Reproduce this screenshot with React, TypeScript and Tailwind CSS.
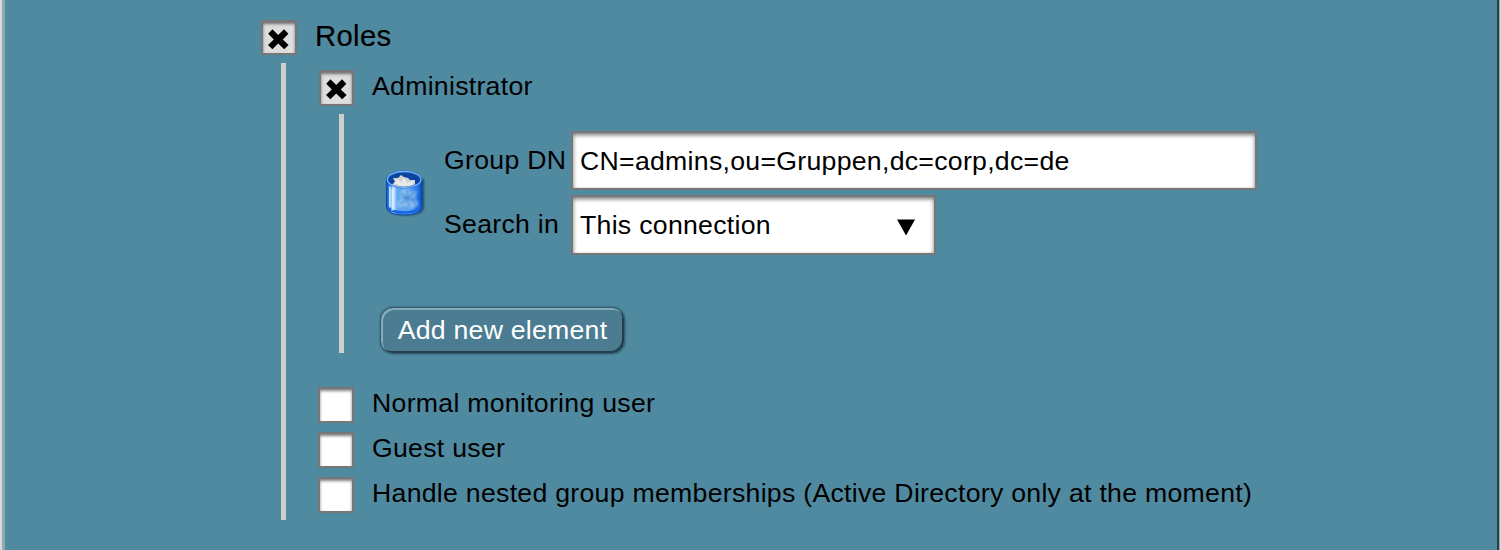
import type { ReactNode } from "react";

function CheckBox({ checked, className }: { checked?: boolean; className: string }) {
  return (
    <span
      role="checkbox"
      aria-checked={!!checked}
      className={`block shrink-0 border-2 border-[#77777a] shadow-[inset_0_2px_3px_rgba(0,0,0,0.5)] ${checked ? "bg-[#dedede]" : "bg-white"} ${className}`}
    >
      {checked && (
        <svg viewBox="0 0 32 32" className="h-8 w-8" fill="#000">
          <path d="M9.4 7.3 L15.2 13.1 L21 7.3 L25.4 11.7 L19.8 17.4 L25.6 23.1 L21.2 27.3 L15.2 21.5 L9.4 27.3 L5 23.1 L10.8 17.4 L5.2 11.7 Z" />
        </svg>
      )}
    </span>
  );
}

function Label({ children, className = "" }: { children: ReactNode; className?: string }) {
  return (
    <span className={`block whitespace-nowrap text-[26.67px] leading-[30px] tracking-[0.28px] ${className}`}>
      {children}
    </span>
  );
}

function TrashIcon() {
  return (
    <svg viewBox="0 0 40 48" className="h-12 w-10">
      <defs>
        <linearGradient id="body" x1="0" x2="1">
          <stop offset="0" stopColor="#1256c4" />
          <stop offset=".12" stopColor="#3f8eee" />
          <stop offset=".2" stopColor="#cfe9ff" />
          <stop offset=".3" stopColor="#5ba6f3" />
          <stop offset=".65" stopColor="#5aa3ec" />
          <stop offset=".88" stopColor="#2476e8" />
          <stop offset="1" stopColor="#0847b5" />
        </linearGradient>
        <filter id="soft"><feGaussianBlur stdDeviation=".8" /></filter>
      </defs>
      <path d="M2.5 10 V38 Q3 46 21 46.5 Q39 46 38.8 38 V10 Z" fill="#12333f" opacity=".75" filter="url(#soft)" />
      <path d="M1.5 10 V38 Q2 45.5 19.2 46 Q36.5 45.5 37 38 V10 Z" fill="url(#body)" stroke="#0749b5" strokeWidth="1" />
      <path d="M3 37 Q5 43.5 19.2 43.5 Q34 43 35.5 37" fill="none" stroke="#1765df" strokeWidth="2.6" />
      <ellipse cx="19.2" cy="10.5" rx="18" ry="9" fill="#0a4eba" />
      <ellipse cx="19.2" cy="10.5" rx="16.8" ry="8" fill="#0b439f" stroke="#6fb2ff" strokeWidth="1.4" />
      <path d="M7 15.5 L10 13 L8 9 L13 9 L16 6 L19 8 L23 9 L25 11 L30 11 L30 15.5 Q19 20 7 15.5 Z" fill="#cfd3d6" />
      <path d="M12 10 L16 13 L19 9 L22 14 L29 12 L27 16 L16 17 L9 14 Z" fill="#f5f2ed" opacity=".75" />
      <path d="M15 23 L20 19 L25 23 L32 22 L30 29 L34 35 L27 40 L20 37 L14 39 L11 34 L16 29 Z" fill="#a9d1f5" opacity=".6" filter="url(#soft)" />
      <path d="M16 24 L23 29 L30 23 M22 21 L24 38 M15 35 L24 29 L32 35 M17 29 L31 30" fill="none" stroke="#3d7dca" strokeWidth="1.4" opacity=".85" filter="url(#soft)" />
      <path d="M7 20 L8 20 L8.2 41 L7 41 Z M4.5 18 L5.2 18 L5.2 38 L4.5 38 Z" fill="#fff" stroke="#e4f5ff" strokeWidth="1.2" opacity=".8" />
    </svg>
  );
}

function OptionRow({ children }: { children: ReactNode }) {
  return (
    <div className="flex h-[45px] items-start">
      <CheckBox className="h-9 w-9" />
      <Label className="ml-[18px] pt-px">{children}</Label>
    </div>
  );
}

const field =
  "flex items-center whitespace-nowrap border-2 border-[#77777a] bg-white shadow-[inset_0_2px_4px_rgba(0,0,0,0.55)] text-[26.67px] tracking-[0.28px]";

export default function App() {
  return (
    <main className="flex h-[550px] w-[1501px] overflow-hidden bg-[#508aa0] font-['Liberation_Sans',sans-serif] text-black">
      <div className="w-[2px] bg-[#d9d9d9]" />
      <div className="w-px bg-[#a3a3a3]" />
      <div className="w-[2px] bg-[#84adbc]" />
      <div className="min-w-0 flex-1 pl-[256px] pt-5">
        <div className="flex h-[43px]">
          <CheckBox checked className="h-[35px] w-9" />
          <span className="ml-[18px] text-[29.33px] leading-[32px] tracking-[0.3px] [-webkit-text-stroke:0.2px_black]">Roles</span>
        </div>
        <div className="ml-5 h-[457px] border-l-[5px] border-[#cfcfcf] pl-8 pt-[7px]">
          <div className="ml-px flex h-11">
            <CheckBox checked className="h-9 w-[35px]" />
            <Label className="ml-[18px] pt-px">Administrator</Label>
          </div>
          <div className="ml-[21px] h-[239px] border-l-[5px] border-[#cfcfcf] pl-9 pt-[17px]">
            <div className="flex h-[124px]">
              <div className="ml-[5px] w-[59px] pt-[38px]"><TrashIcon /></div>
              <div>
                <div className="flex h-16">
                  <Label className="w-[127px] pt-[14px]">Group DN</Label>
                  <div className={`${field} h-[59px] w-[686px] pl-[7px] pt-px`}>CN=admins,ou=Gruppen,dc=corp,dc=de</div>
                </div>
                <div className="flex">
                  <Label className="w-[127px] pt-[14px]">Search in</Label>
                  <div className={`${field} h-[60px] w-[365px] justify-between pl-[7px] pr-[19px]`}>
                    <span>This connection</span>
                    <svg viewBox="0 0 18 17" className="mt-1 h-[17px] w-[18px]"><path d="M0 .5H18L9 16.5Z" /></svg>
                  </div>
                </div>
              </div>
            </div>
            <button className="mt-[52px] block h-[47px] w-[245px] rounded-[13px] border border-[#355f70] bg-[#4b7c92] pb-[2px] text-[26.67px] leading-[30px] tracking-[0.24px] whitespace-nowrap text-white shadow-[inset_2px_2px_0_#86abb9,inset_-2px_-2px_0_#213f4c,0_0_2px_#294f5e]">
              Add new element
            </button>
          </div>
          <div className="pt-[34px]">
            <OptionRow>Normal monitoring user</OptionRow>
            <OptionRow>Guest user</OptionRow>
            <OptionRow>Handle nested group memberships (Active Directory only at the moment)</OptionRow>
          </div>
        </div>
      </div>
      <div className="w-[2px] bg-[#20414e]" />
      <div className="w-px bg-[#a3a3a3]" />
      <div className="w-px bg-[#d9d9d9]" />
    </main>
  );
}
